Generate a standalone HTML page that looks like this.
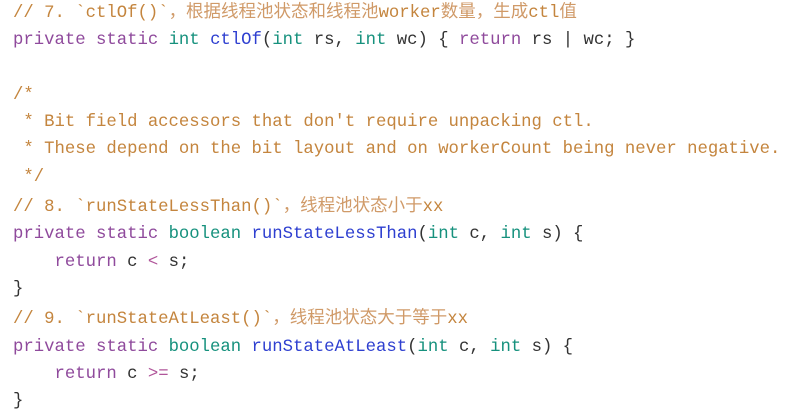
<!DOCTYPE html>
<html><head><meta charset="utf-8"><style>
html,body{margin:0;background:#fff;width:794px;height:418px;overflow:hidden}
pre{margin:0;position:absolute;left:13px;top:-3px;font-family:"Liberation Mono","Noto Sans CJK SC",monospace;font-size:17.3px;line-height:27.3px;color:#333}
.c{color:#c4853e}.k{color:#8f4a9c}.t{color:#16917d}.f{color:#2e3fd0}.o{color:#b0559a}
.z{font-family:"Noto Sans CJK SC",sans-serif;font-size:17.5px;color:#d09a68}
</style></head><body><pre><span class="c">// 7. `ctlOf()`<span class="z">，根据线程池状态和线程池</span>worker<span class="z">数量，生成</span>ctl<span class="z">值</span></span>
<span class="k">private static</span> <span class="t">int</span> <span class="f">ctlOf</span>(<span class="t">int</span> rs, <span class="t">int</span> wc) { <span class="k">return</span> rs | wc; }

<span class="c">/*
 * Bit field accessors that don't require unpacking ctl.
 * These depend on the bit layout and on workerCount being never negative.
 */</span>
<span class="c">// 8. `runStateLessThan()`<span class="z">，线程池状态小于</span>xx</span>
<span class="k">private static</span> <span class="t">boolean</span> <span class="f">runStateLessThan</span>(<span class="t">int</span> c, <span class="t">int</span> s) {
    <span class="k">return</span> c <span class="o">&lt;</span> s;
}
<span class="c">// 9. `runStateAtLeast()`<span class="z">，线程池状态大于等于</span>xx</span>
<span class="k">private static</span> <span class="t">boolean</span> <span class="f">runStateAtLeast</span>(<span class="t">int</span> c, <span class="t">int</span> s) {
    <span class="k">return</span> c <span class="o">&gt;=</span> s;
}</pre></body></html>
